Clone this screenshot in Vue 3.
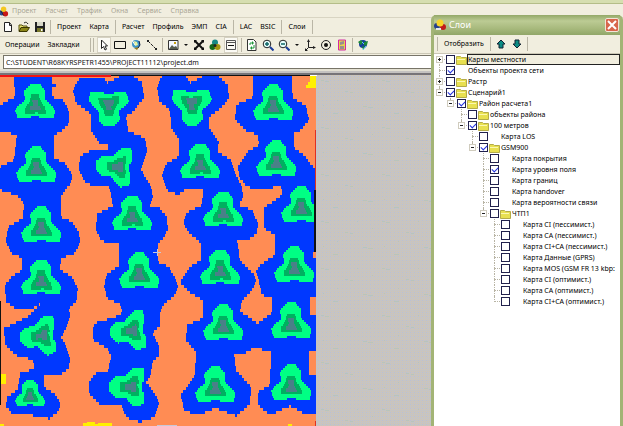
<script setup>
import { ref } from 'vue'

const menus = ['Проект', 'Расчет', 'Трафик', 'Окна', 'Сервис', 'Справка']
const groups = [
  ['Проект', 'Карта'],
  ['Расчет', 'Профиль', 'ЭМП', 'CIA'],
  ['LAC', 'BSIC'],
  ['Слои'],
]
const tools = [
  ['cursor', 'rect', 'earth', 'line'],
  ['image', 'drop', 'cross', 'rgb', 'frame'],
  ['refresh', 'zoomin', 'zoomout', 'drop', 'axis', 'target', 'phone'],
  ['globe'],
]
const path = ref('C:\\STUDENT\\R68KYRSPETR1455\\PROJECT11112\\project.dm')

const node = (level, label, o = {}) => ({ level, label, on: false, folder: false, sign: '', last: false, ...o })
const rows = ref([
  node(0, 'Карты местности', { folder: true, sign: '+', selected: true, first: true }),
  node(0, 'Объекты проекта сети', { on: true }),
  node(0, 'Растр', { folder: true, sign: '+' }),
  node(0, 'Сценарий1', { folder: true, sign: '-', on: true, last: true }),
  node(1, 'Район расчета1', { folder: true, sign: '-', on: true, last: true }),
  node(2, 'объекты района', { folder: true }),
  node(2, '100 метров', { folder: true, sign: '-', on: true, last: true }),
  node(3, 'Карта LOS'),
  node(3, 'GSM900', { folder: true, sign: '-', on: true, last: true }),
  node(4, 'Карта покрытия'),
  node(4, 'Карта уровня поля', { on: true }),
  node(4, 'Карта границ'),
  node(4, 'Карта handover'),
  node(4, 'Карта вероятности связи'),
  node(4, 'ЧТП1', { folder: true, sign: '-', last: true }),
  node(5, 'Карта CI (пессимист.)'),
  node(5, 'Карта CA (пессимист.)'),
  node(5, 'Карта CI+CA (пессимист.)'),
  node(5, 'Карта Данные (GPRS)'),
  node(5, 'Карта MOS (GSM FR 13 kbp:'),
  node(5, 'Карта CI (оптимист.)'),
  node(5, 'Карта CA (оптимист.)'),
  node(5, 'Карта CI+CA (оптимист.)', { last: true }),
])

/* Fills a polygon with horizontal runs of square cells, as on a raster coverage map. */
function raster(points, cell) {
  const ys = points.map((p) => p[1])
  const top = Math.floor(Math.min(...ys) / cell) * cell
  const bottom = Math.max(...ys)
  let d = ''
  for (let y = top; y < bottom; y += cell) {
    const mid = y + cell / 2
    const xs = []
    points.forEach(([x1, y1], i) => {
      const [x2, y2] = points[(i + 1) % points.length]
      if (y1 > mid !== y2 > mid) xs.push(x1 + ((mid - y1) * (x2 - x1)) / (y2 - y1))
    })
    xs.sort((a, b) => a - b)
    for (let k = 0; k + 1 < xs.length; k += 2) {
      d += `M${Math.round(xs[k])} ${y}H${Math.round(xs[k + 1])}v${cell}H${Math.round(xs[k])}z`
    }
  }
  return d
}
const parse = (s) => s.split(' ').map((p) => p.split(',').map(Number))

const coverage = [
  '14,76 52,76 52,83 56,84 56,86 52,86 52,97 64,101 69,112 69,123 60,133 54,134 54,158 66,164 72,175 71,183 63,193 61,196 61,217 72,222 79,232 80,243 74,254 61,258 60,270 71,276 78,288 76,302 69,308 70,318 66,328 61,338 65,343 70,357 69,368 59,376 44,374 44,387 56,395 60,402 59,411 49,419 40,416 12,414 6,406 7,396 14,393 18,388 20,373 34,369 33,360 15,355 5,345 4,328 15,323 27,317 32,312 41,303 31,309 16,309 6,302 5,285 12,276 22,270 22,258 11,253 6,241 8,227 23,218 24,204 18,196 0,190 0,167 14,160 17,135 0,131 0,105 15,97',
  '85,77 103,77 107,83 120,76 133,76 142,82 144,97 134,111 126,116 128,131 145,138 147,150 141,170 150,185 153,196 150,207 160,208 167,218 168,230 163,238 158,243 158,262 169,267 175,278 178,285 175,295 164,304 160,312 160,325 152,333 159,345 159,355 152,363 151,375 146,382 156,396 159,404 155,417 140,422 127,418 121,405 99,404 89,394 89,382 96,373 108,371 111,356 107,348 93,340 93,326 98,322 113,318 122,313 121,305 107,298 104,287 106,275 119,266 119,244 101,241 96,230 97,214 113,206 110,190 109,187 86,184 79,170 80,156 90,151 108,150 108,145 100,144 91,131 91,114 76,103 73,90 78,80',
  '162,76 186,76 190,83 203,76 218,76 228,86 229,98 222,107 209,117 209,127 219,142 217,151 231,160 236,175 242,187 243,197 239,205 252,210 258,223 257,233 248,240 237,241 238,245 240,261 254,274 256,282 252,290 242,300 240,312 250,318 258,324 258,346 243,354 234,354 236,370 251,387 250,404 236,416 226,412 215,408 200,415 184,411 181,395 195,375 196,352 186,340 187,325 203,318 203,300 190,293 180,282 190,267 201,260 201,243 189,233 183,222 186,213 202,205 203,188 185,190 178,195 167,190 162,177 165,165 179,156 179,140 171,127 170,110 159,101 157,87',
  '253,76 292,76 292,86 293,98 306,106 309,120 300,131 294,133 294,148 305,156 315,170 315,252 313,252 313,258 316,258 316,297 310,297 310,314 316,314 316,350 309,350 309,376 316,376 316,413 305,414 290,406 270,415 258,405 258,392 270,385 271,352 256,348 256,325 272,313 272,298 262,295 259,282 256,272 260,265 275,255 275,235 264,228 264,208 275,200 282,195 281,185 264,190 247,187 239,177 238,167 247,152 259,145 258,135 245,130 235,120 236,105 253,97',
].map((s) => raster(parse(s), 3))

const shapes = {
  field: parse('-4,-21 5,-21 6,-19 10,-15 10,-6 14,-2 17,1 20,5 19,14 6,14 4,12 -4,12 -5,14 -17,14 -20,5 -17,1 -10,-5 -11,-14'),
  near: parse('-4,-10 4,-10 5,-5 6,-3 10,2 11,8 4,9 2,7 -3,9 -10,9 -10,3 -6,-2'),
  core: parse('-3,-5 3,-5 3,0 5,2 6,6 1,6 -5,6 -5,2 -2,0'),
}
/* Antennas: x, y, heading in degrees, scale */
const sites = [
  [35, 105, 0, 1], [36, 168, 0, 1], [41, 228, 0, 1], [41, 281, 0, 1], [41, 336, -95, 1], [30, 396, 0, 0.75],
  [109, 106, 180, 1], [117, 167, -85, 1], [132, 217, 0, 1], [139, 274, 0, 1], [131, 331, -95, 1], [130, 387, -90, 1],
  [192, 105, 180, 1], [200, 165, 0, 1], [223, 213, 0, 1], [220, 271, 0, 1], [223, 326, 0, 1], [215, 388, 0, 1],
  [273, 106, 0, 1], [276, 162, 0, 1], [301, 208, 0, 1], [294, 268, 0, 1], [291, 324, 0, 1], [291, 386, 0, 1],
]
const spots = Object.keys(shapes).flatMap((kind) =>
  sites.map(([cx, cy, deg, k]) => {
    const a = (deg * Math.PI) / 180
    const pts = shapes[kind].map(([x, y]) => [
      Math.min(315, cx + k * (x * Math.cos(a) - y * Math.sin(a))),
      cy + k * (x * Math.sin(a) + y * Math.cos(a)),
    ])
    return { kind, d: raster(pts, 2) }
  })
)
</script>

<template>
  <div class="app">
    <header class="strip"></header>
    <nav class="menubar">
      <svg class="logo" viewBox="0 0 10 12" aria-hidden="true">
        <circle cx="2" cy="8" r="3" fill="#284a9c" /><circle cx="6" cy="9" r="3" fill="#c81818" />
        <circle cx="4" cy="4" r="3" fill="#f4c820" /><path d="M1 6l3 5" stroke="#222" />
      </svg>
      <a v-for="m in menus" :key="m" href="#">{{ m }}</a>
    </nav>

    <div class="toolbar main">
      <button class="tool" aria-label="Новый">
        <svg viewBox="0 0 12 12"><path d="M2.500 1.500h5l2 2.500v6.500h-7z" fill="#fff" stroke="#222" /><path d="M7.500 1.500v3h2" fill="none" stroke="#222" /></svg>
      </button>
      <button class="tool" aria-label="Открыть">
        <svg viewBox="0 0 12 12"><path d="M1 10V4h3l1 1h4v2" fill="#e8e070" stroke="#55500c" /><path d="M1 10.500l2-4h8.500l-2.500 4z" fill="#8c8618" stroke="#3c3800" /><path d="M6 2c2-1.500 3-.5 4 1" fill="none" stroke="#222" /></svg>
      </button>
      <button class="tool" aria-label="Сохранить">
        <svg viewBox="0 0 12 12"><path d="M1 1h10v10H1z" fill="#222" /><path d="M3 1h6v4H3z" fill="#d8d8c8" /><path d="M3 7h6v4H3z" fill="#77772a" /><path d="M7 8h1.500v2H7z" fill="#fff" /></svg>
      </button>
      <template v-for="(g, i) in groups" :key="i">
        <i class="sep"></i>
        <button v-for="b in g" :key="b" class="word">{{ b }}</button>
      </template>
      <i class="sep"></i>
    </div>

    <div class="toolbar edit">
      <button class="word">Операции</button>
      <button class="word">Закладки</button>
      <i class="sep grip"></i>
      <template v-for="(g, i) in tools" :key="i">
        <i class="sep"></i>
        <button v-for="(t, j) in g" :key="j" class="tool" :class="t" :aria-label="t">
          <svg v-if="t === 'cursor'" viewBox="0 0 12 12"><path d="M3.500 1v8.500l2-2 1.500 3.500 1.500-.8-1.500-3.200h2.500z" fill="#fff" stroke="#222" /></svg>
          <svg v-else-if="t === 'rect'" viewBox="0 0 12 12"><path d="M.5 2.500h11v7H.5z" fill="none" stroke="#111" /></svg>
          <svg v-else-if="t === 'earth'" viewBox="0 0 12 12"><circle cx="6" cy="5" r="4" fill="#3d94c8" /><path d="M4 2l3 1 1 3-3 1z" fill="#e8f4a0" /><path d="M2 1l3 5" stroke="#fff" /><path d="M4 9l5-1-2 3z" fill="#947a1c" /><path d="M9 2l1 4-2 3" fill="none" stroke="#124" /></svg>
          <svg v-else-if="t === 'line'" viewBox="0 0 12 12"><path d="M2 2l8 8" stroke="#222" stroke-dasharray="3 1" /><path d="M1 1h2v2H1zM9 9h2v2H9z" fill="#222" /></svg>
          <svg v-else-if="t === 'image'" viewBox="0 0 12 12"><path d="M1.500 1.500h9.500v9H1.500z" fill="#f4f8ff" stroke="#333" /><path d="M2 10l3-4 2 2 2-1 2 3z" fill="#555c50" /><path d="M7 3h2v2H7z" fill="#c4a010" /></svg>
          <svg v-else-if="t === 'drop'" viewBox="0 0 6 12"><path d="M1 5h4l-2 2z" fill="#111" /></svg>
          <svg v-else-if="t === 'cross'" viewBox="0 0 12 12"><path d="M2 2l8 8M10 2l-8 8" stroke="#111" stroke-width="2" /><path d="M1 1h3L1 4zM11 1v3L8 1zM1 11V8l3 3zM11 11H8l3-3z" fill="#111" /></svg>
          <svg v-else-if="t === 'rgb'" viewBox="0 0 12 12"><circle cx="6" cy="3.500" r="3" fill="#178884" /><circle cx="3.500" cy="8" r="3" fill="#14681c" /><circle cx="8.500" cy="8" r="3" fill="#a49410" /><circle cx="6" cy="6.500" r="1.500" fill="#222" /></svg>
          <svg v-else-if="t === 'frame'" viewBox="0 0 12 12"><path d="M1.500 1.500h9v9h-9zM1.500 3.500h9" fill="none" stroke="#555" /><path d="M3 6h6v1H3z" fill="#111" /></svg>
          <svg v-else-if="t === 'refresh'" viewBox="0 0 12 12"><path d="M1.500 .5h6l2.500 2.500v8.500h-8.500z" fill="#fff" stroke="#333" /><path d="M4 6V4h3M8 6v3H5" fill="none" stroke="#1c9838" /><path d="M6 2l2 2-2 2zM6 7L4 9l2 2z" fill="#1c9838" /></svg>
          <svg v-else-if="t === 'zoomin' || t === 'zoomout'" viewBox="0 0 12 12"><circle cx="5" cy="5" r="3.800" fill="#e8ffff" stroke="#222" /><path d="M8 8l3.500 3.500" stroke="#1a3c9c" stroke-width="2" /><path d="M3 5h4" stroke="#166" stroke-width="1.500" /><path v-if="t === 'zoomin'" d="M5 3v4" stroke="#166" stroke-width="1.500" /></svg>
          <svg v-else-if="t === 'axis'" viewBox="0 0 12 12"><path d="M4.500 2v6.500H11M4.500 8.500L2 11" fill="none" stroke="#222" /><path d="M3 3l1.500-3 1.500 3zM9 7l3 1.500-3 1.500zM1 9v3h3z" fill="#222" /></svg>
          <svg v-else-if="t === 'target'" viewBox="0 0 12 12"><circle cx="6" cy="6" r="4.500" fill="none" stroke="#222" /><circle cx="6" cy="6" r="2" fill="#111" /></svg>
          <svg v-else-if="t === 'phone'" viewBox="0 0 12 12"><path d="M2.500 1h7v10h-7z" fill="#e8d44c" stroke="#d428a4" /><path d="M4 3l4-1v3l-4 1zM4 7h4v3H4z" fill="#9a8c90" /></svg>
          <svg v-else viewBox="0 0 12 12"><circle cx="6" cy="5" r="4" fill="#143c9c" /><path d="M1 3l3-2 2 2-2 3zM7 3l4-1-1 4-3 1zM5 7l3 1-2 3z" fill="#1c8838" /><path d="M5 3l2 2M9 7l-3 4" stroke="#6cf" /></svg>
        </button>
      </template>
    </div>

    <div class="address"><input v-model="path" type="text" aria-label="Путь проекта" /></div>
    <div class="edge"></div>

    <main class="workspace">
      <svg class="map" width="317" height="351" viewBox="0 75 317 351" shape-rendering="crispEdges" role="img" aria-label="Карта уровня поля">
        <path d="M0 75h316v351H0z" fill="#ff8c54" />
        <path v-for="d in coverage" :key="d" :d="d" class="blue" />
        <path v-for="(s, i) in spots" :key="i" :d="s.d" :class="s.kind" />
        <path d="M310 76h6v12h-10v-3h2v-3h2zM0 374h6v10H0zM83 423h4v-1h8v2h3v-1h14v3H83zM288 424h4v2h-4zM0 424h4v2H0z" fill="#fff000" />
        <path d="M0 75h111v2H0z" fill="#f01414" />
        <path d="M111 75h205v1H111zM314 190h2v62h-2zM0 301h1v104H0z" fill="#111" />
        <path d="M315 130h1v60h-1zM315 421h1v5h-1z" fill="#e03020" />
        <path d="M153 252h8v1h-8zM157 249h1v7h-1zM157 425h20v1h-20z" fill="#c8c8d8" />
        <path d="M310 75h7v1h-7z" fill="#fff" />
      </svg>
      <svg class="desk" aria-hidden="true" shape-rendering="crispEdges">
        <defs>
          <pattern id="grain" width="4" height="4" patternUnits="userSpaceOnUse">
            <path d="M0 0h1v1H0zM2 2h1v1H2zM2 0h1v1H2zM0 2h1v1H0z" fill="#d0c5b2" /><path d="M1 1h1v1H1z" fill="#bbc0d2" />
          </pattern>
          <pattern id="flecks" width="61" height="47" patternUnits="userSpaceOnUse">
            <path d="M4 5h3v1H4zM8 6h4v1H8zM28 16h3v1h-3zM33 17h3v1h-3zM46 31h4v1H46zM51 32h5v1h-5zM16 38h5v1h-5zM20 25h1v1h-1zM40 5h1v1h-1zM55 12h1v1h-1zM6 30h1v1H6z" fill="#b8c4bc" />
          </pattern>
        </defs>
        <rect width="100%" height="100%" fill="#c5c4c5" />
        <rect width="100%" height="100%" fill="url(#grain)" />
        <rect width="100%" height="100%" fill="url(#flecks)" />
      </svg>
    </main>

    <section class="dialog" aria-label="Слои">
      <div class="title">
        <svg viewBox="0 0 12 12" aria-hidden="true">
          <circle cx="3" cy="7" r="3" fill="#27408c" /><circle cx="9" cy="8" r="3" fill="#c01c1c" />
          <circle cx="6" cy="4" r="3.500" fill="#f8d428" /><path d="M2 9h5v2H2z" fill="#e8e8e8" />
        </svg>
        <h1>Слои</h1>
        <button class="close" aria-label="Закрыть"><svg viewBox="0 0 12 12"><path d="M2 2l8 8M10 2l-8 8" stroke="#fff" stroke-width="2" /></svg></button>
      </div>
      <div class="body">
        <div class="toolbar layers">
          <i class="sep"></i>
          <button class="word">Отобразить</button>
          <i class="sep"></i>
          <button class="tool" aria-label="Вверх"><svg viewBox="0 0 12 12"><path d="M6 2l4 4H8v4H4V6H2z" fill="#0c8c84" stroke="#123" /></svg></button>
          <button class="tool" aria-label="Вниз"><svg viewBox="0 0 12 12"><path d="M6 10l4-4H8V2H4v4H2z" fill="#0c8c84" stroke="#123" /></svg></button>
          <i class="sep"></i>
        </div>
        <ul class="tree">
          <li v-for="r in rows" :key="r.label">
            <span v-for="n in r.level" :key="n" class="indent"></span>
            <span class="branch" :class="{ last: r.last, first: r.first }"><b v-if="r.sign" :class="{ plus: r.sign === '+' }"></b></span>
            <label>
              <input v-model="r.on" type="checkbox" />
              <svg class="folder" viewBox="0 0 11 10" aria-hidden="true">
                <template v-if="r.folder"><path d="M.5 1.500h4l1 1h5v7h-10z" fill="#e8e050" stroke="#b4ac48" /><path d="M1 4.500h8" stroke="#fbf8b0" /></template>
              </svg>
              <span class="name" :class="{ selected: r.selected }">{{ r.label }}</span>
            </label>
          </li>
        </ul>
      </div>
    </section>
  </div>
</template>

<style>
body { margin: 0; }
</style>

<style scoped>
* { box-sizing: border-box; }
.app {
  position: relative;
  display: flex;
  flex-direction: column;
  min-height: 100vh;
  overflow: hidden;
  background: #f1eedf;
  color: #000;
  font: 7px/10px "Noto Sans", "Liberation Sans", sans-serif;
}
button { border: 0; padding: 0; background: none; color: inherit; font: inherit; }
svg { display: block; }
.strip { height: 4px; background: #d6deb0; border-bottom: 1px solid #b4bd88; }
.menubar { display: flex; align-items: center; gap: 9px; height: 14px; border-bottom: 1px solid #d8d4c2; }
.menubar a { color: #aaa695; text-decoration: none; }
.logo { width: 9px; height: 12px; margin-right: -6px; }
.toolbar { display: flex; align-items: center; height: 18px; border-bottom: 1px solid #cbc7b6; }
.tool { width: 12px; height: 14px; margin: 0 2px; flex: none; }
.tool svg { width: 12px; height: 12px; margin: 1px 0; }
.drop { width: 6px; margin: 0 2px; }
.drop svg { width: 6px; }
.word { padding: 0 4px; white-space: nowrap; }
.sep { width: 1px; height: 14px; margin: 0 2px; flex: none; background: #bab6a6; }
.main { align-self: flex-start; border-bottom: 0; }
.edit { border-top: 1px solid #cbc7b6; padding-left: 1px; }
.grip { margin: 0 0 0 6px; }
.cursor, .frame { background: #fbfaf4; box-shadow: 0 0 0 1px #d6d2c2; }
.address { height: 15px; padding: 1px 0 0 3px; }
.address input {
  display: block;
  width: 100%;
  height: 14px;
  padding: 0 2px;
  border: 1px solid #777468;
  background: #fff;
  color: #111;
  font: inherit;
  border-radius: 0;
}
.edge { height: 6px; border-top: 2px solid #e4e1d3; border-bottom: 2px solid #777478; background: #c4c2c0; }
.workspace { display: flex; flex: 1; background: #c5c4c6; }
.map { flex: none; }
.desk { flex: 1; height: auto; min-width: 0; }
.blue { fill: #0038ff; }
.field { fill: #00ff84; }
.near { fill: #00b060; }
.core { fill: #4a8088; }
.dialog {
  position: absolute;
  top: 15px;
  right: 0;
  bottom: 0;
  width: 192px;
  display: flex;
  flex-direction: column;
  border: solid #a3b476;
  border-width: 0 3px;
  border-radius: 5px 5px 0 0;
  background: #a3b476;
}
.title {
  display: flex;
  align-items: center;
  gap: 3px;
  height: 20px;
  padding-right: 1px;
  background: linear-gradient(#93a867, #bccb94 30%, #a6b87b 70%, #91a668);
}
.title > svg { width: 12px; height: 12px; }
.title h1 { flex: 1; margin: 0; color: #fff; font: 9px/14px "Noto Sans", "DejaVu Sans", sans-serif; }
.close { width: 14px; height: 14px; border: 1px solid #f2e4d8; border-radius: 2px; background: #d8664c; }
.close svg { width: 12px; height: 12px; }
.body { flex: 1; background: #fff; overflow: hidden; }
.layers { height: 19px; padding-left: 1px; background: #f1eedf; }
.tree { margin: 0; padding: 0; list-style: none; }
.tree li { display: flex; height: 11px; }
.tree label { display: flex; align-items: center; flex: 1; min-width: 0; }
.indent, .branch { width: 11px; flex: none; }
.branch { position: relative; }
.branch::before, .branch::after { content: ""; position: absolute; left: 5px; }
.branch::before { top: 0; bottom: 0; border-left: 1px dotted #b8b4a4; }
.branch.last::before { bottom: 5px; }
.branch.first::before { top: 5px; }
.branch::after { top: 5px; right: 0; border-top: 1px dotted #b8b4a4; }
.branch b {
  position: absolute;
  z-index: 1;
  top: 3px;
  left: 3px;
  width: 5px;
  height: 5px;
  outline: 1px solid #d0ccbe;
  background: linear-gradient(#222, #222) center / 3px 1px no-repeat #fff;
}
.branch b.plus {
  background: linear-gradient(#222, #222) center / 3px 1px no-repeat, linear-gradient(#222, #222) center / 1px 3px no-repeat #fff;
}
.tree input {
  appearance: none;
  display: grid;
  place-items: start center;
  flex: none;
  width: 9px;
  height: 9px;
  margin: 0 1px 0 1px;
  border: 1px solid #20204c;
  background: #fff;
}
.tree input:checked::before {
  content: "";
  width: 5px;
  height: 3px;
  margin-top: 1px;
  border: solid #2030e0;
  border-width: 0 0 1px 1px;
  transform: rotate(-45deg);
}
.folder { width: 11px; height: 10px; flex: none; }
.name { flex: 1; height: 11px; padding-left: 1px; line-height: 11px; white-space: nowrap; }
.name.selected { background: #f1eedf; outline: 1px solid #222; outline-offset: -1px; }
</style>
